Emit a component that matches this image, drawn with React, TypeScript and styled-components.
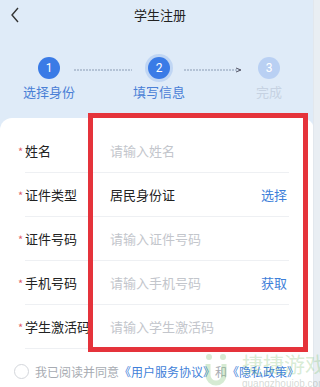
import React from "react";
import styled, { createGlobalStyle } from "styled-components";

const GlobalStyle = createGlobalStyle`
  html, body {
    margin: 0;
    padding: 0;
    background: #dfebf8;
  }
  body {
    font-family: "Noto Sans CJK SC", "Noto Sans", sans-serif;
  }
`;

const Page = styled.div`
  position: relative;
  width: 320px;
  height: 387px;
  overflow: hidden;
  background: #dfebf8;
`;

const Header = styled.div`
  height: 28px;
  display: flex;
  align-items: center;
  justify-content: center;
  position: relative;
  font-size: 13px;
  color: #222;
`;

const Back = styled.div`
  position: absolute;
  left: 10px;
  top: 7px;
  display: flex;
`;

const Stepper = styled.div`
  display: flex;
  padding: 29px 0 0 24px;
  height: 61px;
`;

const Step = styled.div`
  width: 50px;
  display: flex;
  flex-direction: column;
  align-items: center;
`;

const Circle = styled.div<{ $state: "done" | "active" | "todo" }>`
  width: 22px;
  height: 22px;
  border-radius: 50%;
  display: flex;
  align-items: center;
  justify-content: center;
  font-family: "Roboto", "Noto Sans", sans-serif;
  font-size: 12px;
  color: #fff;
  background: ${(p) => (p.$state === "todo" ? "#b9d0f3" : "#3a7be6")};
  box-shadow: ${(p) =>
    p.$state === "active" ? "0 0 0 3px rgba(58, 123, 230, 0.18)" : "none"};
`;

const StepLabel = styled.div<{ $muted?: boolean }>`
  margin-top: 3px;
  white-space: nowrap;
  font-size: 13px;
  color: ${(p) => (p.$muted ? "#c6d2e2" : "#4a80d6")};
`;

const Connector = styled.div`
  flex: 0 0 60px;
  height: 22px;
  display: flex;
  align-items: center;
  padding-top: 3px;
  box-sizing: border-box;
`;

const Card = styled.div`
  background: #fff;
  border-radius: 12px 12px 0 0;
  padding-top: 11px;
  height: 269px;
  margin-right: 6px;
  box-sizing: border-box;
`;

const Row = styled.div`
  display: flex;
  align-items: center;
  height: 44px;
  margin: 0 25px;
  border-bottom: 1px solid #eef0f3;
  box-sizing: border-box;
  font-size: 13px;
`;

const Label = styled.div`
  width: 85px;
  color: #222;
  white-space: nowrap;
`;

const Star = styled.span`
  display: inline-block;
  width: 7px;
  margin-left: -7px;
  color: #e0606a;
  font-size: 11px;
`;

const Value = styled.div<{ $placeholder?: boolean }>`
  flex: 1;
  color: ${(p) => (p.$placeholder ? "#c3c6cc" : "#222")};
`;

const Action = styled.div`
  color: #3f7fd9;
  margin-right: 2px;
`;

const Agreement = styled.div`
  display: flex;
  align-items: center;
  padding: 14px 0 0 14px;
  font-size: 12px;
  color: #a7abb2;
  white-space: nowrap;
`;

const Radio = styled.div`
  width: 13px;
  height: 13px;
  border-radius: 50%;
  border: 1px solid #d3d6db;
  margin-right: 6px;
`;

const Link = styled.span`
  color: #3f7fd9;
`;

const Highlight = styled.div`
  position: absolute;
  left: 88px;
  top: 113px;
  width: 220px;
  height: 239px;
  border: 5px solid #e5333b;
  box-sizing: border-box;
`;

const Watermark = styled.div`
  position: absolute;
  left: 204px;
  top: 351px;
  display: flex;
  align-items: flex-start;
  gap: 14px;
  pointer-events: none;
  white-space: nowrap;
`;

const MarkText = styled.div`
  display: flex;
  flex-direction: column;
  align-items: flex-start;
`;

const MarkBig = styled.div`
  font-size: 21px;
  line-height: 24px;
  color: rgba(120, 190, 110, 0.3);
`;

const MarkSmall = styled.div`
  margin-top: 3px;
  font-family: "Liberation Sans", sans-serif;
  font-size: 10px;
  line-height: 12px;
  color: rgba(150, 160, 150, 0.4);
`;

const RightEdge = styled.div`
  position: absolute;
  right: 0;
  top: 0;
  width: 6px;
  height: 100%;
  background: #e9eef3;
  border-left: 1px solid #e2e7ed;
`;

const fields = [
  { label: "姓名", value: "请输入姓名", placeholder: true },
  { label: "证件类型", value: "居民身份证", action: "选择" },
  { label: "证件号码", value: "请输入证件号码", placeholder: true },
  { label: "手机号码", value: "请输入手机号码", placeholder: true, action: "获取" },
  { label: "学生激活码", value: "请输入学生激活码", placeholder: true },
];

const Dashes: React.FC<{ arrow?: boolean }> = ({ arrow }) => (
  <svg width="60" height="6" viewBox="0 0 60 6">
    <line
      x1="0"
      y1="3"
      x2={arrow ? 56 : 58}
      y2="3"
      stroke="#8a9bb3"
      strokeWidth="1"
      strokeDasharray="2 1"
    />
    {arrow && <path d="M52 1 L57 3 L52 5" fill="none" stroke="#556" strokeWidth="1" />}
  </svg>
);

export default function App() {
  return (
    <>
      <GlobalStyle />
      <Page>
        <Header>
          <Back>
            <svg width="10" height="16" viewBox="0 0 10 16">
              <path d="M8 1 L2 8 L8 15" fill="none" stroke="#333" strokeWidth="1.4" />
            </svg>
          </Back>
          学生注册
        </Header>
        <Stepper>
          <Step>
            <Circle $state="done">1</Circle>
            <StepLabel>选择身份</StepLabel>
          </Step>
          <Connector>
            <Dashes />
          </Connector>
          <Step>
            <Circle $state="active">2</Circle>
            <StepLabel>填写信息</StepLabel>
          </Step>
          <Connector>
            <Dashes arrow />
          </Connector>
          <Step>
            <Circle $state="todo">3</Circle>
            <StepLabel $muted>完成</StepLabel>
          </Step>
        </Stepper>
        <Card>
          {fields.map((f) => (
            <Row key={f.label}>
              <Label>
                <Star>*</Star>
                {f.label}
              </Label>
              <Value $placeholder={f.placeholder}>{f.value}</Value>
              {f.action && <Action>{f.action}</Action>}
            </Row>
          ))}
          <Agreement>
            <Radio />
            我已阅读并同意 <Link>《用户服务协议》</Link> 和 <Link>《隐私政策》</Link>
          </Agreement>
        </Card>
        <RightEdge />
        <Highlight />
        <Watermark>
          <svg width="24" height="36" viewBox="0 0 24 36">
            <circle cx="5" cy="6" r="3" fill="rgba(120,190,110,0.3)" />
            <circle cx="19" cy="6" r="3" fill="rgba(120,190,110,0.3)" />
            <path
              d="M4 13 V24 a8 8 0 0 0 16 0 V13"
              fill="none"
              stroke="rgba(120,190,110,0.3)"
              strokeWidth="5"
            />
          </svg>
          <MarkText>
            <MarkBig>捷捷游戏</MarkBig>
            <MarkSmall>guangzhoujob.com</MarkSmall>
          </MarkText>
        </Watermark>
      </Page>
    </>
  );
}
